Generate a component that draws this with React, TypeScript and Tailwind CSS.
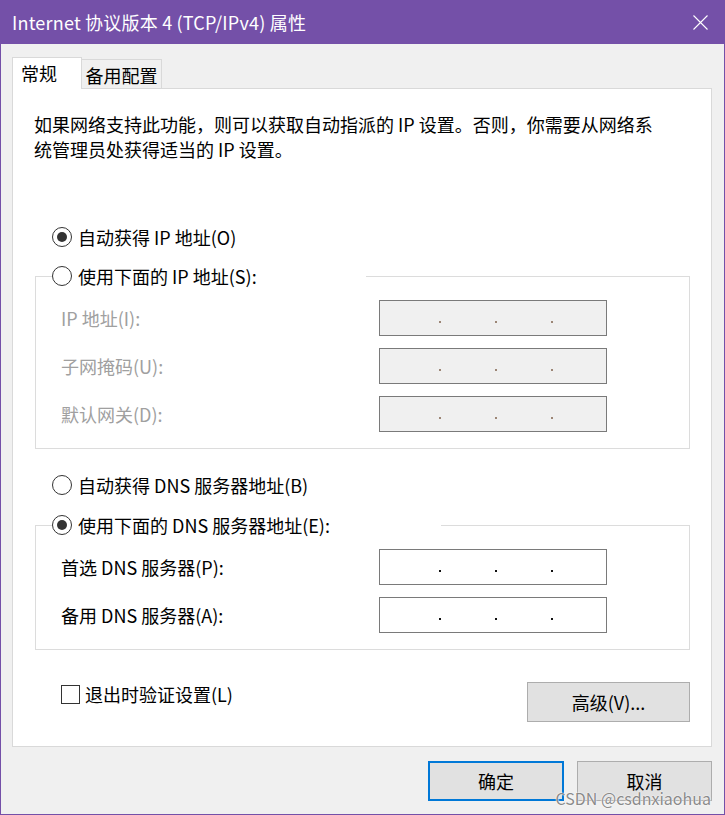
import React from 'react';

const FONT = "font-['Noto_Sans_CJK_SC','Noto_Sans',sans-serif]";

function Radio({ checked }: { checked?: boolean }) {
  return (
    <span className="w-[20px] h-[20px] rounded-full border border-[#333333] bg-white flex items-center justify-center shrink-0">
      {checked && <span className="w-[10px] h-[10px] rounded-full bg-[#333333]" />}
    </span>
  );
}

function IpBox({ disabled }: { disabled?: boolean }) {
  const dot = disabled ? 'bg-[#9c8676]' : 'bg-[#111111]';
  return (
    <div
      className={`w-[228px] h-[36px] border border-[#7a7a7a] flex items-start pl-[59px] pt-[20px] gap-[54px] ${
        disabled ? 'bg-[#f0f0f0]' : 'bg-white'
      }`}
    >
      <span className={`w-[2px] h-[2px] ${dot}`} />
      <span className={`w-[2px] h-[2px] ${dot}`} />
      <span className={`w-[2px] h-[2px] ${dot}`} />
    </div>
  );
}

function FieldRow({ label, disabled }: { label: string; disabled?: boolean }) {
  return (
    <div className="flex items-center pl-[25px] h-[36px]">
      <span className={`w-[318px] ${disabled ? 'text-[#a0a0a0]' : 'text-black'}`}>{label}</span>
      <IpBox disabled={disabled} />
    </div>
  );
}

export default function App() {
  return (
    <div
      className={`relative w-[725px] h-[815px] flex flex-col bg-[#f0f0f0] border-x border-b border-[#7450a8] overflow-hidden text-[18px] text-black ${FONT}`}
    >
      {/* Title bar */}
      <div className="h-[44px] shrink-0 bg-[#7450a8] flex items-center justify-between pl-[11px] pr-[16px] text-white">
        <span className="leading-[24px] tracking-[0.2px]">Internet 协议版本 4 (TCP/IPv4) 属性</span>
        <svg width="15" height="15" viewBox="0 0 15 15" className="mt-[1px]">
          <path d="M0.5 0.5L14.5 14.5M14.5 0.5L0.5 14.5" stroke="#ffffff" strokeWidth="1.1" fill="none" />
        </svg>
      </div>

      <div className="pl-[11px]">
        {/* Tabs */}
        <div className="mt-[13px] h-[31px] flex items-end">
          <div className="w-[70px] h-[32px] -mb-px relative z-10 bg-white border border-b-0 border-[#d9d9d9] pl-[8px] pt-[3px] leading-[24px]">
            常规
          </div>
          <div className="w-[80px] h-[29px] border-t border-r border-[#d9d9d9] bg-[#f0f0f0] text-center pt-[3px] leading-[24px]">
            备用配置
          </div>
        </div>

        {/* Panel */}
        <div className="w-[700px] h-[659px] border border-[#d9d9d9] bg-white flex flex-col">
          <p className="pl-[21px] pt-[23px] leading-[25px]">
            如果网络支持此功能，则可以获取自动指派的 IP 设置。否则，你需要从网络系
            <br />
            统管理员处获得适当的 IP 设置。
          </p>

          <div className="mt-[63px] h-[24px] flex items-center gap-[6px] pl-[39px]">
            <Radio checked />
            <span>自动获得 IP 地址(O)</span>
          </div>

          <div className="pl-[22px]">
            <fieldset className="mt-[15px] w-[655px] border border-[#dcdcdc] pb-[16px]">
              <legend className="ml-[16px] w-[314px] h-[24px] p-0">
                <div className="h-[24px] flex items-center gap-[6px]">
                  <Radio />
                  <span>使用下面的 IP 地址(S):</span>
                </div>
              </legend>
              <div className="mt-[12px] flex flex-col gap-[12px]">
                <FieldRow label="IP 地址(I):" disabled />
                <FieldRow label="子网掩码(U):" disabled />
                <FieldRow label="默认网关(D):" disabled />
              </div>
            </fieldset>

            <div className="mt-[24px] h-[24px] flex items-center gap-[6px] pl-[17px]">
              <Radio />
              <span>自动获得 DNS 服务器地址(B)</span>
            </div>

            <fieldset className="mt-[16px] w-[655px] border border-[#dcdcdc] pb-[16px]">
              <legend className="ml-[16px] w-[389px] h-[24px] p-0">
                <div className="h-[24px] flex items-center gap-[6px]">
                  <Radio checked />
                  <span>使用下面的 DNS 服务器地址(E):</span>
                </div>
              </legend>
              <div className="mt-[12px] flex flex-col gap-[12px]">
                <FieldRow label="首选 DNS 服务器(P):" />
                <FieldRow label="备用 DNS 服务器(A):" />
              </div>
            </fieldset>

            <div className="mt-[32px] w-[655px] flex items-start justify-between">
              <label className="ml-[26px] h-[24px] flex items-center gap-[5px]">
                <span className="w-[19px] h-[19px] border border-[#333333] bg-white" />
                <span>退出时验证设置(L)</span>
              </label>
              <button className="w-[163px] h-[40px] bg-[#e1e1e1] border border-[#adadad]">高级(V)...</button>
            </div>
          </div>
        </div>

        {/* Dialog buttons */}
        <div className="w-[700px] mt-[14px] flex justify-end gap-[13px]">
          <button className="w-[136px] h-[40px] bg-[#e1e1e1] border-2 border-[#0078d7]">确定</button>
          <button className="w-[135px] h-[40px] bg-[#e1e1e1] border border-[#adadad]">取消</button>
        </div>
      </div>

      {/* watermark */}
      <span className="absolute right-[13px] top-[789px] text-[16px] leading-[18px] text-[#8a8a8a] [text-shadow:0_0_2px_#ffffff,0_0_1px_#ffffff]">
        CSDN @csdnxiaohua
      </span>
    </div>
  );
}
